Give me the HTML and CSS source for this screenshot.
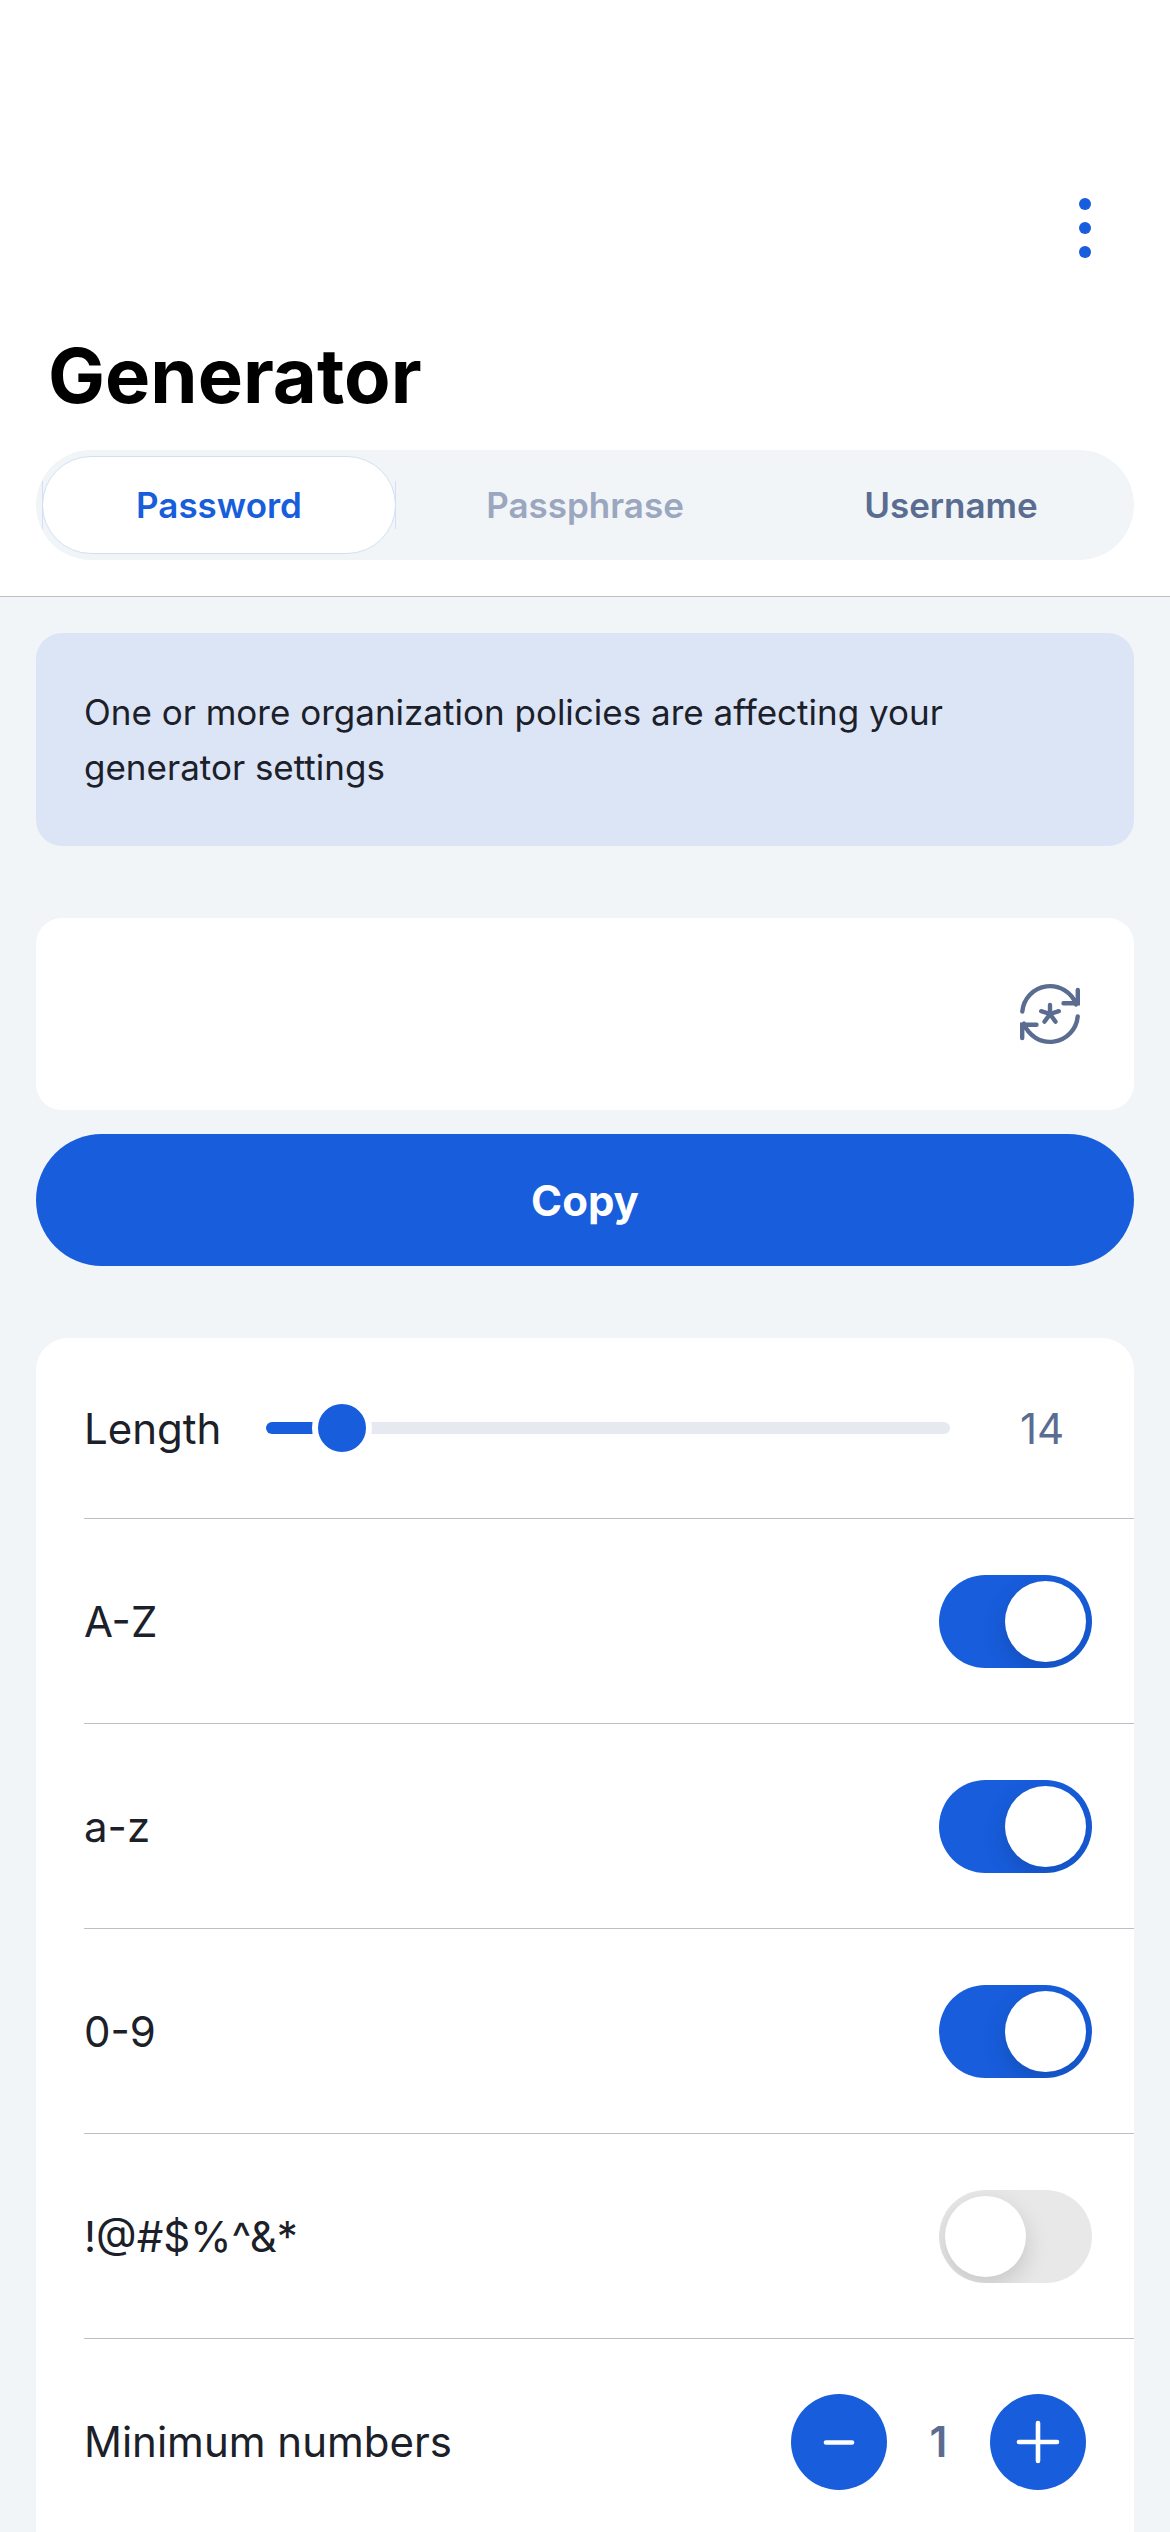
FILE: index.html
```
<!DOCTYPE html>
<html lang="en">
<head>
  <meta charset="utf-8">
  <meta name="viewport" content="width=device-width, initial-scale=1">
  <title>Generator</title>
  <link rel="stylesheet" href="styles.css">
</head>
<body>
  <div class="app">
    <header class="header">
      <div class="toolbar">
        <button class="menu-button" type="button" aria-label="Options">
          <svg class="menu-icon" viewBox="0 0 12 60" aria-hidden="true">
            <circle cx="6" cy="6" r="6"/>
            <circle cx="6" cy="30" r="6"/>
            <circle cx="6" cy="54" r="6"/>
          </svg>
        </button>
      </div>
      <h1 class="title">Generator</h1>
      <div class="tabs" role="tablist">
        <button class="tab tab-selected" type="button" role="tab" aria-selected="true">Password</button>
        <button class="tab" type="button" role="tab" aria-selected="false" disabled>Passphrase</button>
        <button class="tab" type="button" role="tab" aria-selected="false">Username</button>
      </div>
    </header>

    <main class="content">
      <p class="notice">One or more organization policies are affecting your generator settings</p>

      <div class="value-group">
        <div class="value-box">
          <input class="value-input" type="text" aria-label="Generated password" readonly>
          <button class="refresh-button" type="button" aria-label="Regenerate password">
            <svg class="refresh-icon" viewBox="0 0 60 60" stroke-width="4.4" aria-hidden="true">
              <path d="M2.300 27.500A27.800 27.800 0 0 1 56.100 20.400M43.500 19.300H57.800V6"/>
              <path d="M57.700 32.500A27.800 27.800 0 0 1 3.900 39.600M16.500 40.700H2.200V54"/>
              <path d="M30 30V21M30 30L21.200 27.200M30 30L38.800 27.200M30 30L24.600 37.600M30 30L35.400 37.600"/>
            </svg>
          </button>
        </div>
        <button class="copy-button" type="button">Copy</button>
      </div>

      <section class="card">
        <div class="row row-length">
          <label class="length-label" for="length">Length</label>
          <input class="slider" id="length" type="range" min="5" max="128" value="14">
          <output class="length-value" for="length">14</output>
        </div>
        <div class="row">
          <label for="uppercase">A-Z</label>
          <input class="toggle" id="uppercase" type="checkbox" role="switch" checked>
        </div>
        <div class="row">
          <label for="lowercase">a-z</label>
          <input class="toggle" id="lowercase" type="checkbox" role="switch" checked>
        </div>
        <div class="row">
          <label for="digits">0-9</label>
          <input class="toggle" id="digits" type="checkbox" role="switch" checked>
        </div>
        <div class="row">
          <label for="symbols">!@#$%^&amp;*</label>
          <input class="toggle" id="symbols" type="checkbox" role="switch">
        </div>
        <div class="row row-stepper">
          <span id="min-numbers">Minimum numbers</span>
          <div class="stepper" role="group" aria-labelledby="min-numbers">
            <button class="step-button" type="button" aria-label="Decrease">
              <svg class="step-icon" viewBox="0 0 48 48" stroke-width="4.600" aria-hidden="true"><path d="M11 24.500H37"/></svg>
            </button>
            <span class="step-value">1</span>
            <button class="step-button" type="button" aria-label="Increase">
              <svg class="step-icon" viewBox="0 0 48 48" stroke-width="4.600" aria-hidden="true"><path d="M5 24H43M24 5V43"/></svg>
            </button>
          </div>
        </div>
      </section>
    </main>
  </div>
</body>
</html>
```
FILE: styles.css
```
:root {
  --blue: #175ddc;
  --ink: #1b2029;
  --slate: #5a6d91;
  --page: #f1f5f8;
  --tint: #dbe5f6;
  --line: #bcc0c5;
}

* {
  box-sizing: border-box;
}

body {
  margin: 0;
  color: var(--ink);
  font-family: Inter, "Liberation Sans", sans-serif;
  font-size: 42px;
}

button,
input {
  margin: 0;
  padding: 0;
  border: 0;
  background: none;
  color: inherit;
  font: inherit;
}

.app {
  display: flex;
  flex-direction: column;
  height: 100vh;
  background: var(--page);
}

/* Header */

.header {
  flex: none;
  padding: 162px 36px 36px;
  border-bottom: 1px solid var(--line);
  background: #fff;
}

.toolbar {
  display: flex;
  justify-content: flex-end;
}

.menu-button {
  display: flex;
  align-items: center;
  justify-content: center;
  width: 98px;
  height: 132px;
}

.menu-icon {
  width: 12px;
  height: 60px;
  fill: var(--blue);
}

.title {
  margin: 36px 0 30px;
  padding-left: 12px;
  color: #000;
  font-size: 76px;
  font-weight: 700;
  line-height: 90px;
}

.tabs {
  display: flex;
  gap: 12px;
  height: 110px;
  padding: 6px;
  border-radius: 55px;
  background: var(--page);
}

.tab {
  position: relative;
  flex: 1;
  border: 1px solid transparent;
  border-radius: 49px;
  color: var(--slate);
  font-size: 35px;
  font-weight: 600;
}

.tab:disabled {
  color: #9ba6bf;
}

.tab-selected {
  border-color: #d3dff5;
  background: #fff;
  color: var(--blue);
}

.tab-selected::before,
.tab-selected::after {
  content: "";
  position: absolute;
  top: 24px;
  bottom: 24px;
  left: -1px;
  width: 1px;
  background: #d3dff5;
}

.tab-selected::after {
  right: -1px;
  left: auto;
}

/* Content */

.content {
  display: flex;
  flex: 1;
  flex-direction: column;
  gap: 72px;
  min-height: 0;
  padding: 36px;
  overflow-y: auto;
  scrollbar-width: none;
}

.content > * {
  flex: none;
}

.notice {
  margin: 0;
  padding: 52px 48px 51px;
  border-radius: 26px;
  background: var(--tint);
  font-size: 35px;
  line-height: 55px;
}

.value-group {
  display: flex;
  flex-direction: column;
  gap: 24px;
}

.value-box {
  display: flex;
  align-items: center;
  height: 192px;
  padding: 0 54px 0 48px;
  border-radius: 26px;
  background: #fff;
}

.value-input {
  flex: 1;
  min-width: 0;
  outline: 0;
}

.refresh-button {
  display: flex;
  width: 60px;
  height: 60px;
}

.refresh-icon {
  width: 60px;
  height: 60px;
  overflow: visible;
  fill: none;
  stroke: var(--slate);
  stroke-linecap: round;
}

.copy-button {
  height: 132px;
  border-radius: 66px;
  background: var(--blue);
  color: #fff;
  font-weight: 700;
}

/* Settings card */

.card {
  padding-left: 48px;
  border-radius: 32px 32px 0 0;
  background: #fff;
}

.row {
  display: flex;
  align-items: center;
  justify-content: space-between;
  min-height: 205px;
  padding-right: 42px;
  border-bottom: 1px solid var(--line);
}

.row:last-child {
  border-bottom: 0;
}

.row-length {
  gap: 42px;
  min-height: 181px;
}

.length-label {
  min-width: 140px;
}

.length-value {
  width: 100px;
  color: var(--slate);
  text-align: center;
}

.slider {
  flex: 1;
  min-width: 0;
  height: 60px;
  appearance: none;
}

.slider::-webkit-slider-runnable-track {
  height: 12px;
  border-radius: 6px;
  background: linear-gradient(to right, var(--blue) 11%, #e6e9f0 11%);
}

.slider::-webkit-slider-thumb {
  width: 60px;
  height: 60px;
  margin-top: -24px;
  border: 6px solid #fff;
  border-radius: 50%;
  background: var(--blue);
  appearance: none;
}

.toggle {
  display: flex;
  width: 153px;
  height: 93px;
  padding: 6px;
  border-radius: 47px;
  background: #e8e8e8;
  overflow: hidden;
  appearance: none;
}

.toggle::before {
  content: "";
  width: 81px;
  height: 81px;
  border-radius: 50%;
  background: #fff;
  box-shadow: 0 9px 24px rgba(0, 0, 0, 0.15);
}

.toggle:checked {
  justify-content: flex-end;
  background: var(--blue);
}

.row-stepper {
  padding-right: 48px;
}

.stepper {
  display: flex;
  align-items: center;
}

.step-button {
  display: flex;
  width: 96px;
  height: 96px;
  border-radius: 50%;
  background: var(--blue);
}

.step-icon {
  width: 48px;
  height: 48px;
  margin: auto;
  stroke: #fff;
  stroke-linecap: round;
}

.step-value {
  width: 103px;
  color: var(--slate);
  font-weight: 600;
  text-align: center;
}
```
